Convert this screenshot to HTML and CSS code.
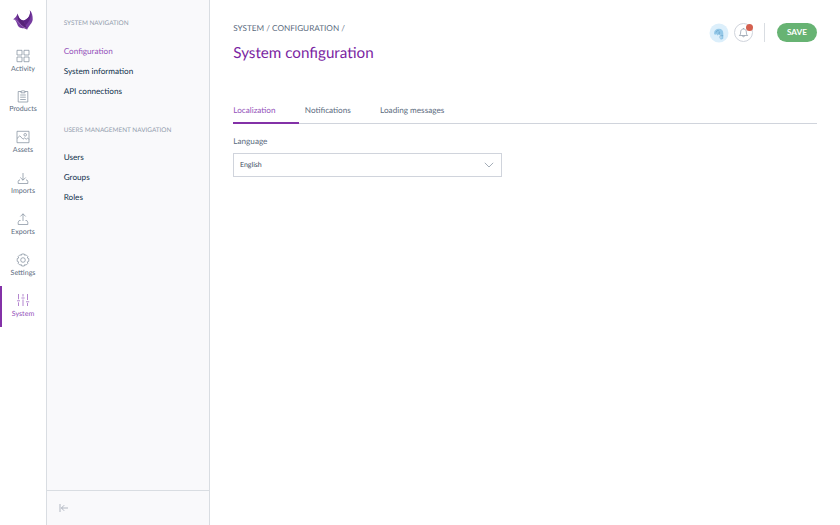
FILE: index.html
```html
<!DOCTYPE html>
<html lang="en">
<head>
<meta charset="utf-8">
<title>System configuration</title>
<link rel="stylesheet" href="styles.css">
</head>
<body>
<div class="app">
  <nav class="rail">
    <svg class="logo" viewBox="0 0 20 20"><path d="M.2 9.300C2 8.200 3.800 6 4.700 3.500 5.200 7 7 10 10.500 10.500 15 9.500 18 5 16.800.3 19 2.300 19.800 6 19.700 9.500 19.500 13 16 15.500 14.200 19.400 11 17.800 7.500 18.800 5.500 16.500 3.500 14 4 10 .2 9.300Z" fill="#763ba0"/><path d="M4.700 3.500C5.200 7 7 10 10.500 10.500L14.200 19.400C8 16 3.500 10 4.700 3.500Z" fill="#562278"/><path d="M16.800.3C18 5 15 9.500 10.500 10.500L12.500 15.500C17 11 19 6 16.800.3Z" fill="#5c2484"/><path d="M1 9.300C5 9.800 5 14.800 13.500 18.500" fill="none" stroke="#ad82c4" stroke-width=".6"/></svg>
    <a class="rail-item"><svg class="icon" viewBox="0 0 14 14"><path d="M1 1.300h5v4.700H1zM8 1.300h5v4.700H8zM1 8h5v4.700H1zM8 8h5v4.700H8z"/></svg><span>Activity</span></a>
    <a class="rail-item"><svg class="icon" viewBox="0 0 14 14"><path d="M5 2.500H2.200v10.500h9.600V2.500H9M5 3.800V2.100h1.200a.9.9 0 0 1 1.600 0H9v1.700zM4.200 6h5.600M4.200 8.200h5.600M4.200 10.500h5.600"/></svg><span>Products</span></a>
    <a class="rail-item"><svg class="icon" viewBox="0 0 14 14"><path d="M1 1.300h12v11.400H1zM1 8.500l2.800-2.700L7 9.200l1.700-1.300 1.500 1.400L11.500 8 13 9.500"/><circle cx="9.200" cy="4.800" r="1.300"/></svg><span>Assets</span></a>
    <a class="rail-item"><svg class="icon" viewBox="0 0 14 14"><path d="M7 2v7.200M4.300 6.500L7 9.200l2.700-2.700M4 9H3l-.8 1.300v2.200h9.600v-2.200L11 9h-1"/></svg><span>Imports</span></a>
    <a class="rail-item"><svg class="icon" viewBox="0 0 14 14"><path d="M7 9V1.800M4.300 4.500L7 1.800l2.700 2.700M4.500 8.500H3.200l-1 1.700v2.300h9.600v-2.300l-1-1.700H9.500"/></svg><span>Exports</span></a>
    <a class="rail-item"><svg class="icon" viewBox="0 0 14 14"><path d="M5.700 1h2.600l.4 1.300 1.400-.5 1.800 1.800-.6 1.400 1.500.6v2.700l-1.500.6.6 1.400-1.800 1.800-1.400-.5-.4 1.400H5.700l-.4-1.400-1.400.5-1.800-1.800.6-1.400-1.500-.6V5.600L2.700 5l-.6-1.400 1.800-1.800 1.400.5z"/><circle cx="7" cy="7" r="2.300"/></svg><span>Settings</span></a>
    <a class="rail-item active"><svg class="icon" viewBox="0 0 14 14"><path d="M2.500 1v5.300M2.500 9.300V13M1 7.800h3M7 1v2.500M7 6.500V13M5.400 5h3.200M11.500 1v6M11.500 10v3M10 8.800h3.200"/></svg><span>System</span></a>
  </nav>
  <aside class="panel">
    <div class="panel-body">
      <h2>SYSTEM NAVIGATION</h2>
      <a class="link current"><span>Configuration</span></a>
      <a class="link"><span>System information</span></a>
      <a class="link"><span>API connections</span></a>
      <h2 class="second">USERS MANAGEMENT NAVIGATION</h2>
      <a class="link"><span>Users</span></a>
      <a class="link"><span>Groups</span></a>
      <a class="link"><span>Roles</span></a>
    </div>
    <div class="panel-foot"><svg viewBox="0 0 10 10"><path d="M1 1v8M9 5H2.500M5.200 2.200L2.400 5l2.800 2.800"/></svg></div>
  </aside>
  <main class="main">
    <header class="header">
      <div>
        <div class="crumbs">SYSTEM / CONFIGURATION /</div>
        <h1>System configuration</h1>
      </div>
      <div class="actions">
        <svg class="avatar" viewBox="0 0 20 20"><circle cx="10" cy="10" r="9.500" fill="#dceffb"/><path d="M5 10.500C5.200 7.300 7 5.800 9.800 5.800c3 0 4.500 2 4.500 4.700v4.500c0 1.900-3.400 1.900-3.400.2h1.400v-3.200l-2.500-.5-1.300 1-1.300-1.500-1.200 1z" fill="#94c8e8"/><path d="M7 9.500c.2-1.500 1.500-2.200 2.800-1.800M11 11.300c-1.700-.3-1.500-2.200 0-2.400M11 15.200v-2.500h3.200" fill="none" stroke="#5c9bc5" stroke-width=".6"/></svg>
        <div class="bell"><svg viewBox="0 0 12 12"><path d="M1.500 9.300c1.400-1 1.300-2.300 1.400-4C3 3.300 4.200 2.200 6 2.200s3 1.100 3.100 3.100c.1 1.700 0 3 1.400 4zM6 2.200V1.200M4.800 9.500c.1 1.600 2.300 1.600 2.400 0"/></svg><i class="dot"></i></div>
        <i class="divider"></i>
        <button class="save">SAVE</button>
      </div>
    </header>
    <div class="tabs">
      <a class="tab selected"><span>Localization</span></a>
      <a class="tab"><span>Notifications</span></a>
      <a class="tab"><span>Loading messages</span></a>
    </div>
    <div class="label"><span>Language</span></div>
    <div class="select"><span>English</span><svg viewBox="0 0 10 6"><path d="M.8.8L5 5 9.200.8"/></svg></div>
  </main>
</div>
</body>
</html>
```
FILE: styles.css
```css
* { box-sizing: border-box; }
body {
  margin: 0;
  font-family: Lato, "Liberation Sans", sans-serif;
  color: #5c6c80;
  background: #fff;
  text-rendering: geometricPrecision;
}
.app { display: flex; height: 525px; overflow: hidden; }
svg { display: block; fill: none; stroke: #7c899a; stroke-width: .7; }

.rail { width: 47px; border-right: 1px solid #d9dde2; }
.logo { width: 20px; height: 20px; margin: 10px 0 11px 13px; stroke: none; }
.rail-item {
  display: flex;
  flex-direction: column;
  align-items: center;
  height: 40.83px;
  padding-top: 7.5px;
  font-size: 7.1px;
  line-height: 9px;
}
.icon { width: 14px; height: 14px; margin-bottom: 1.1px; }
.rail-item.active {
  color: #9452ba;
  border-left: 2px solid #8331a7;
  padding-right: 2px;
}
.active .icon { stroke: #9452ba; }

.panel {
  display: flex;
  flex-direction: column;
  width: 163px;
  background: #f9f9fb;
  border-right: 1px solid #d9dde2;
}
.panel-body { flex: 1; padding: 19px 0 0 16.7px; }
h2 {
  margin: 0 0 12px;
  font-size: 6.42px;
  line-height: 10px;
  font-weight: 400;
  color: #949eae;
}
h2.second { margin: 25px 0 11px; }
.link {
  display: block;
  font-size: 8.16px;
  line-height: 20px;
  color: #11324d;
}
.link.current { color: #9452ba; }
.panel-foot {
  height: 35px;
  border-top: 1px solid #d9dde2;
  padding: 12px 0 0 12px;
}
.panel-foot svg { width: 10px; height: 10px; stroke: #929baa; }

.main { flex: 1; padding: 23px 23px 0 23.3px; }
.header { display: flex; justify-content: space-between; height: 75px; }
.crumbs { font-size: 8.2px; line-height: 10px; }
h1 {
  margin: 9px 0 0;
  font-size: 15.2px;
  line-height: 22px;
  font-weight: 400;
  color: #7a1fa2;
}
.actions { display: flex; align-items: center; height: 19px; }
.avatar { width: 20px; height: 20px; stroke: none; margin-right: 5px; }
.bell {
  position: relative;
  width: 19px;
  height: 19px;
  padding: 3px;
  border: 1px solid #d0d4dc;
  border-radius: 50%;
}
.bell svg { width: 11px; height: 11px; }
.dot {
  position: absolute;
  top: 0;
  right: -1px;
  width: 7px;
  height: 7px;
  border-radius: 50%;
  background: #d4604f;
}
.divider { width: 1px; height: 19px; margin: 0 12px 0 11px; background: #d9dde2; }
.save {
  width: 40px;
  height: 19px;
  padding: 0;
  border: 0;
  border-radius: 10px;
  background: #67b373;
  color: #fff;
  font: 700 8.2px/19px Lato, sans-serif;
}
.tabs { display: flex; height: 26px; border-bottom: 1px solid #d0d4dc; }
.tab {
  height: 26px;
  margin-right: 5.8px;
  padding-right: 23.5px;
  font-size: 8.16px;
  line-height: 25px;
}
.tab.selected { color: #9452ba; border-bottom: 2px solid #8331a7; }
.label { margin: 12px 0 6px; font-size: 8.16px; line-height: 11px; }
.select {
  display: flex;
  align-items: center;
  justify-content: space-between;
  width: 269px;
  height: 24px;
  padding: 0 7px 0 5.700px;
  border: 1px solid #d0d4dc;
  font-size: 7px;
  color: #3c4d60;
}
.select svg { width: 10px; height: 6px; }
```
